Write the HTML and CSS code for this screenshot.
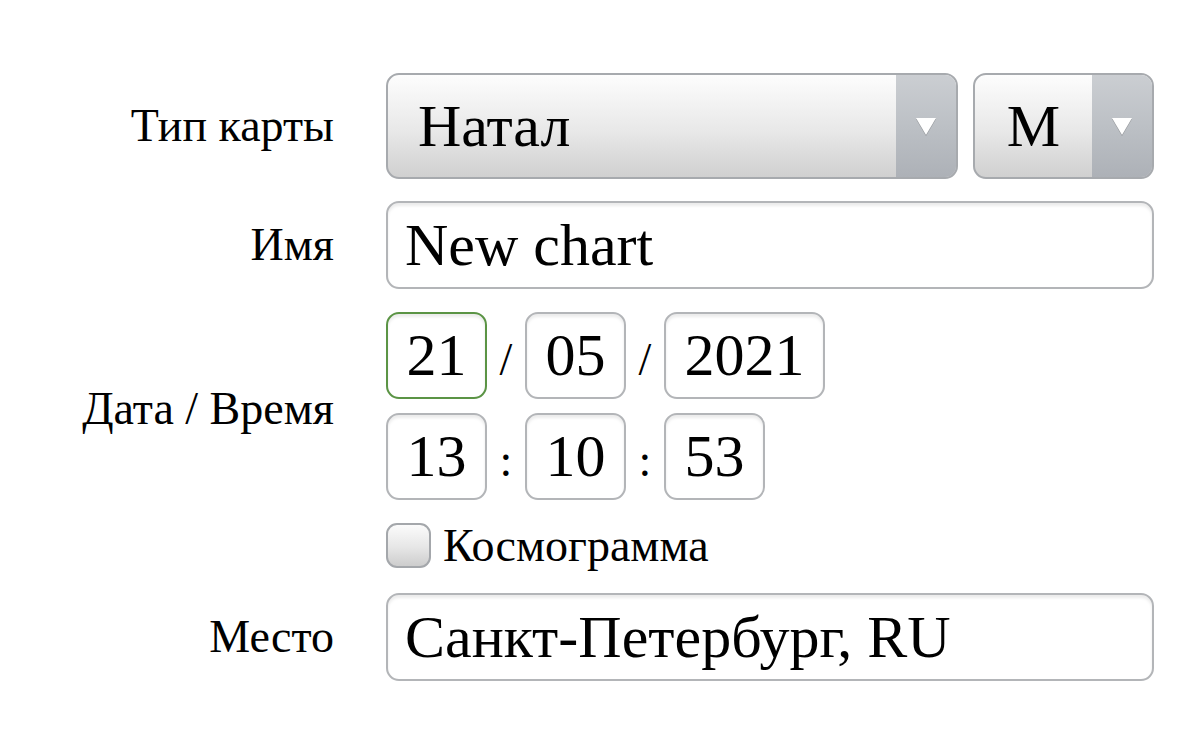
FILE: index.html
```html
<!DOCTYPE html>
<html lang="ru">
<head>
<meta charset="utf-8">
<title>Chart form</title>
<link rel="stylesheet" href="styles.css">
</head>
<body>
<div class="form">
  <div class="row row-type">
    <div class="label">Тип карты</div>
    <div class="controls selects">
      <div class="select select-wide">
        <div class="select-value">Натал</div>
        <div class="select-arrow"><svg class="tri" viewBox="0 0 20 17"><polygon points="0,0 20,0 10,17" fill="#fff"/></svg></div>
      </div>
      <div class="select select-narrow">
        <div class="select-value center">M</div>
        <div class="select-arrow"><svg class="tri" viewBox="0 0 20 17"><polygon points="0,0 20,0 10,17" fill="#fff"/></svg></div>
      </div>
    </div>
  </div>

  <div class="row row-name">
    <div class="label">Имя</div>
    <div class="controls">
      <div class="field">New chart</div>
    </div>
  </div>

  <div class="row row-date">
    <div class="label">Дата / Время</div>
    <div class="controls datetime">
      <div class="line">
        <div class="box box-2 focused">21</div>
        <span class="sep">/</span>
        <div class="box box-2">05</div>
        <span class="sep">/</span>
        <div class="box box-4">2021</div>
      </div>
      <div class="line">
        <div class="box box-2">13</div>
        <span class="sep">:</span>
        <div class="box box-2">10</div>
        <span class="sep">:</span>
        <div class="box box-2">53</div>
      </div>
    </div>
  </div>

  <div class="row row-check">
    <div class="label"></div>
    <div class="controls check">
      <span class="checkbox"></span>
      <span class="check-text">Космограмма</span>
    </div>
  </div>

  <div class="row row-place">
    <div class="label">Место</div>
    <div class="controls">
      <div class="field">Санкт-Петербург, RU</div>
    </div>
  </div>
</div>
</body>
</html>
```

FILE: styles.css
```css
html, body {
  margin: 0;
  padding: 0;
  background: #ffffff;
}

body {
  font-family: "Liberation Serif", "Times New Roman", serif;
  color: #000;
  width: 1200px;
  height: 737px;
  overflow: hidden;
}

.form {
  padding-top: 73px;
  display: flex;
  flex-direction: column;
}

.row {
  display: flex;
  align-items: center;
  gap: 52px;
}

.row-name { margin-top: 22px; }
.row-date { margin-top: 23px; }
.row-check { margin-top: 23px; }
.row-place { margin-top: 25px; }

.label {
  width: 334px;
  flex: none;
  text-align: right;
  font-size: 46px;
  line-height: 1;
}

.row-date .label {
  padding-top: 6px;
}

.controls {
  width: 768px;
  flex: none;
}

.selects {
  display: flex;
  gap: 15px;
}

.select {
  box-sizing: border-box;
  height: 106px;
  border: 2px solid #a7aaae;
  border-radius: 13px;
  overflow: hidden;
  display: flex;
  background: linear-gradient(#fdfdfd, #e8e8e8 55%, #d0d0d0);
}

.select-wide { width: 572px; }
.select-narrow { width: 181px; }

.select-value {
  flex: 1;
  display: flex;
  align-items: center;
  padding-left: 30px;
  font-size: 60px;
}

.select-value.center {
  padding-left: 0;
  justify-content: center;
}

.select-arrow {
  width: 60px;
  flex: none;
  display: flex;
  align-items: center;
  justify-content: center;
  background: linear-gradient(#cbced2, #bcc0c5 50%, #adb1b7);
}

.tri {
  width: 20px;
  height: 17px;
  display: block;
  filter: drop-shadow(0 1px 0.5px rgba(0, 0, 0, 0.25));
}

.field {
  box-sizing: border-box;
  height: 88px;
  border: 2px solid #b3b5b8;
  border-radius: 13px;
  box-shadow: inset 0 3px 3px rgba(0, 0, 0, 0.08);
  display: flex;
  align-items: center;
  padding-left: 17px;
  font-size: 60px;
  background: #fff;
}

.datetime {
  display: flex;
  flex-direction: column;
  gap: 14px;
}

.line {
  display: flex;
  align-items: center;
}

.box {
  box-sizing: border-box;
  height: 87px;
  border: 2px solid #b3b5b8;
  border-radius: 13px;
  box-shadow: inset 0 3px 3px rgba(0, 0, 0, 0.08);
  display: flex;
  align-items: center;
  justify-content: center;
  font-size: 60px;
  background: #fff;
}

.box-2 { width: 101px; }
.box-4 { width: 161px; }

.box.focused {
  border-color: #5b9445;
}

.sep {
  width: 38px;
  text-align: center;
  font-size: 46px;
  line-height: 1;
  padding-top: 8px;
}

.check {
  display: flex;
  align-items: center;
  height: 45px;
}

.checkbox {
  box-sizing: border-box;
  width: 45px;
  height: 45px;
  border: 2px solid #a4a7ab;
  border-radius: 11px;
  background: linear-gradient(#fbfbfb, #e6e6e6 55%, #cdcdcd);
  flex: none;
}

.check-text {
  margin-left: 12px;
  font-size: 46px;
  line-height: 1;
}
```
